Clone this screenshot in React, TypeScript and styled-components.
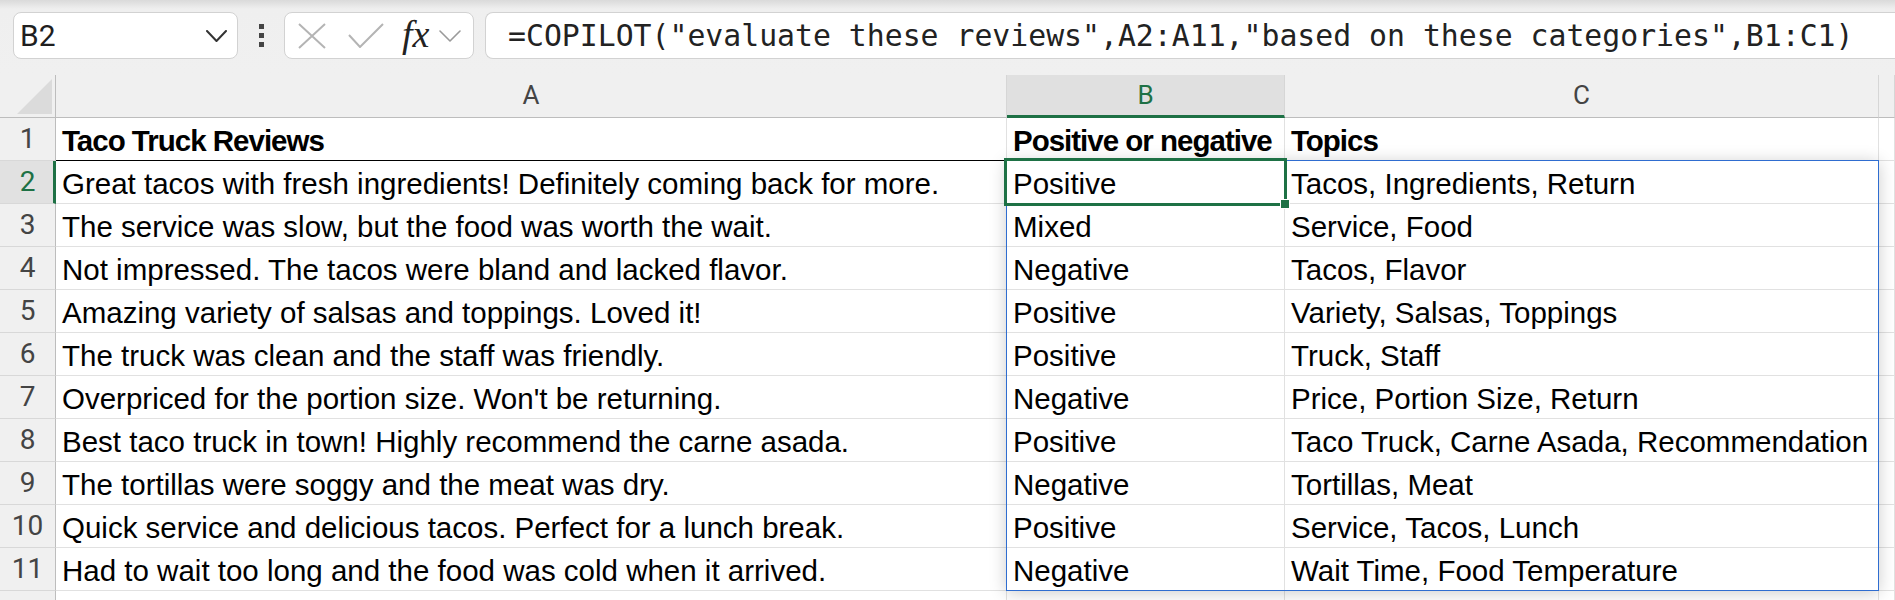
import React, { FC } from 'react';
import styled, { createGlobalStyle } from 'styled-components';

const ROW_H = 43;
const HEAD_W = 56;
const COL_W = [951, 278, 594];
const GREEN = '#1e7145';

const rows: [string, string, string][] = [
  ['Great tacos with fresh ingredients! Definitely coming back for more.', 'Positive', 'Tacos, Ingredients, Return'],
  ['The service was slow, but the food was worth the wait.', 'Mixed', 'Service, Food'],
  ['Not impressed. The tacos were bland and lacked flavor.', 'Negative', 'Tacos, Flavor'],
  ['Amazing variety of salsas and toppings. Loved it!', 'Positive', 'Variety, Salsas, Toppings'],
  ['The truck was clean and the staff was friendly.', 'Positive', 'Truck, Staff'],
  ["Overpriced for the portion size. Won't be returning.", 'Negative', 'Price, Portion Size, Return'],
  ['Best taco truck in town! Highly recommend the carne asada.', 'Positive', 'Taco Truck, Carne Asada, Recommendation'],
  ['The tortillas were soggy and the meat was dry.', 'Negative', 'Tortillas, Meat'],
  ['Quick service and delicious tacos. Perfect for a lunch break.', 'Positive', 'Service, Tacos, Lunch'],
  ['Had to wait too long and the food was cold when it arrived.', 'Negative', 'Wait Time, Food Temperature'],
];

const GlobalStyle = createGlobalStyle`
  html, body {
    margin: 0;
    padding: 0;
    overflow: hidden;
    background: #ffffff;
  }

  * {
    box-sizing: border-box;
  }
`;

const Page = styled.div`
  width: 1895px;
  height: 600px;
  overflow: hidden;
  font-family: 'Liberation Sans', Arial, sans-serif;
`;

/* formula bar */

const Toolbar = styled.div`
  align-items: flex-start;
  background: linear-gradient(#dadada 0, #efefef 9px, #f0f0f0 100%);
  display: flex;
  height: 75px;
  padding: 12px 0 0 13px;
`;

const Box = styled.div`
  align-items: center;
  background: #ffffff;
  border: 1px solid #d2d2d2;
  border-radius: 8px;
  display: flex;
  height: 47px;
`;

const NameBox = styled(Box)`
  justify-content: space-between;
  padding: 0 10px 0 6px;
  width: 225px;
`;

const NameText = styled.span`
  color: #1f1f1f;
  font-family: Roboto, 'Noto Sans', sans-serif;
  font-size: 30px;
`;

const Dots = styled.div`
  align-items: center;
  display: flex;
  flex: 0 0 46px;
  flex-direction: column;
  gap: 4px;
  height: 47px;
  justify-content: center;

  span {
    background: #444444;
    display: block;
    height: 5px;
    width: 5px;
  }
`;

const FxBox = styled(Box)`
  padding-left: 13px;
  width: 190px;
`;

const FxText = styled.span`
  color: #222222;
  font-family: 'Liberation Serif', 'Times New Roman', serif;
  font-size: 38px;
  font-style: italic;
  line-height: 1;
  margin: -4px 10px 0 18px;
`;

const FormulaBox = styled(Box)`
  border-bottom-right-radius: 0;
  border-right: none;
  border-top-right-radius: 0;
  flex: 1;
  margin-left: 11px;
  padding-left: 22px;
`;

const FormulaText = styled.span`
  color: #222222;
  font-family: 'DejaVu Sans Mono', 'Liberation Mono', monospace;
  font-size: 29.8px;
  white-space: pre;
`;

/* grid */

const Row = styled.div<{ $header?: boolean }>`
  background: ${({ $header }) => ($header ? '#f0f0f0' : '#ffffff')};
  display: grid;
  grid-template-columns: ${HEAD_W}px ${COL_W[0]}px ${COL_W[1]}px ${COL_W[2]}px 1fr;
  height: ${ROW_H}px;
`;

const Corner = styled.div`
  border-bottom: 1px solid #bdbdbd;
  border-right: 1px solid #bdbdbd;
  position: relative;

  &::after {
    background: #dbdbdb;
    bottom: 3px;
    clip-path: polygon(100% 0, 100% 100%, 0 100%);
    content: '';
    height: 35px;
    position: absolute;
    right: 3px;
    width: 35px;
  }
`;

const ColHead = styled.div<{ $active?: boolean }>`
  align-items: flex-end;
  background: ${({ $active }) => ($active ? '#e0e0e0' : 'transparent')};
  border-bottom: ${({ $active }) => ($active ? `3px solid ${GREEN}` : '1px solid #bdbdbd')};
  border-right: 1px solid #d6d6d6;
  color: ${({ $active }) => ($active ? GREEN : '#444444')};
  display: flex;
  font-family: Roboto, 'Noto Sans', sans-serif;
  font-size: 26px;
  justify-content: center;
  line-height: 1;
  padding-bottom: ${({ $active }) => ($active ? 7 : 9)}px;
`;

const RowHead = styled.div<{ $active?: boolean }>`
  align-items: flex-end;
  background: ${({ $active }) => ($active ? '#e1e1e1' : '#f0f0f0')};
  border-bottom: 1px solid #d8d8d8;
  border-right: ${({ $active }) => ($active ? `3px solid ${GREEN}` : '1px solid #bdbdbd')};
  color: ${({ $active }) => ($active ? GREEN : '#444444')};
  display: flex;
  font-family: Roboto, 'Noto Sans', sans-serif;
  font-size: 28px;
  justify-content: center;
  line-height: 1;
  padding-bottom: 7px;
  padding-left: ${({ $active }) => ($active ? 2 : 0)}px;
`;

const Cell = styled.div<{ $bold?: boolean; $underline?: boolean }>`
  align-items: flex-end;
  border-bottom: 1px solid ${({ $underline }) => ($underline ? '#000000' : '#e1e1e1')};
  border-right: 1px solid #e1e1e1;
  color: #000000;
  display: flex;
  font-size: 29.5px;
  font-weight: ${({ $bold }) => ($bold ? 700 : 400)};
  letter-spacing: ${({ $bold }) => ($bold ? '-1px' : '0')};
  line-height: 1;
  padding: 0 0 5px 6px;
  white-space: nowrap;
`;

const Body = styled.div`
  position: relative;
`;

const SpillRange = styled.div`
  border: 1px solid #2f6dd0;
  box-shadow: 0 2px 16px rgba(0, 0, 0, 0.2);
  pointer-events: none;
  position: absolute;
`;

const Selection = styled.div`
  border: 3px solid ${GREEN};
  pointer-events: none;
  position: absolute;
`;

const FillHandle = styled.div`
  background: ${GREEN};
  border: 1px solid #ffffff;
  bottom: -6px;
  height: 10px;
  position: absolute;
  right: -6px;
  width: 10px;
`;

const Chevron: FC<{ w: number; h: number; color: string; stroke: number }> = ({ w, h, color, stroke }) => (
  <svg width={w} height={h} viewBox={`0 0 ${w} ${h}`} fill="none">
    <polyline
      points={`1,1 ${w / 2},${h - 1} ${w - 1},1`}
      stroke={color}
      strokeWidth={stroke}
      strokeLinecap="round"
      strokeLinejoin="round"
    />
  </svg>
);

const CancelIcon: FC = () => (
  <svg width={28} height={26} viewBox="0 0 28 26" fill="none">
    <path d="M1 1 L27 25 M27 1 L1 25" stroke="#b4b4b4" strokeWidth={2} />
  </svg>
);

const EnterIcon: FC = () => (
  <svg width={36} height={25} viewBox="0 0 36 25" fill="none" style={{ marginLeft: 22 }}>
    <polyline points="1,12 12,24 35,1" stroke="#b4b4b4" strokeWidth={2} />
  </svg>
);

const App: FC = () => {
  const spillLeft = HEAD_W + COL_W[0] - 1;
  const spillTop = ROW_H - 1;
  const spillWidth = COL_W[1] + COL_W[2] + 1;
  const spillHeight = rows.length * ROW_H + 1;

  return (
    <Page>
      <GlobalStyle />

      <Toolbar>
        <NameBox>
          <NameText>B2</NameText>
          <Chevron w={21} h={12} color="#333333" stroke={2} />
        </NameBox>

        <Dots>
          <span />
          <span />
          <span />
        </Dots>

        <FxBox>
          <CancelIcon />
          <EnterIcon />
          <FxText>fx</FxText>
          <Chevron w={22} h={12} color="#9a9a9a" stroke={1.6} />
        </FxBox>

        <FormulaBox>
          <FormulaText>
            =COPILOT("evaluate these reviews",A2:A11,"based on these categories",B1:C1)
          </FormulaText>
        </FormulaBox>
      </Toolbar>

      <Row $header>
        <Corner />
        <ColHead>A</ColHead>
        <ColHead $active>B</ColHead>
        <ColHead>C</ColHead>
        <ColHead />
      </Row>

      <Body>
        <Row>
          <RowHead>1</RowHead>
          <Cell $bold $underline>Taco Truck Reviews</Cell>
          <Cell $bold>Positive or negative</Cell>
          <Cell $bold>Topics</Cell>
          <Cell />
        </Row>

        {rows.map(([review, tone, topics], i) => (
          <Row key={review}>
            <RowHead $active={i === 0}>{i + 2}</RowHead>
            <Cell>{review}</Cell>
            <Cell>{tone}</Cell>
            <Cell>{topics}</Cell>
            <Cell />
          </Row>
        ))}

        {/* next row, only its top edge is in view */}
        <Row>
          <RowHead />
          <Cell />
          <Cell />
          <Cell />
          <Cell />
        </Row>

        <SpillRange style={{ left: spillLeft, top: spillTop, width: spillWidth, height: spillHeight }} />
        <Selection style={{ left: spillLeft - 2, top: spillTop - 2, width: COL_W[1] + 5, height: ROW_H + 5 }}>
          <FillHandle />
        </Selection>
      </Body>
    </Page>
  );
};

export default App;
